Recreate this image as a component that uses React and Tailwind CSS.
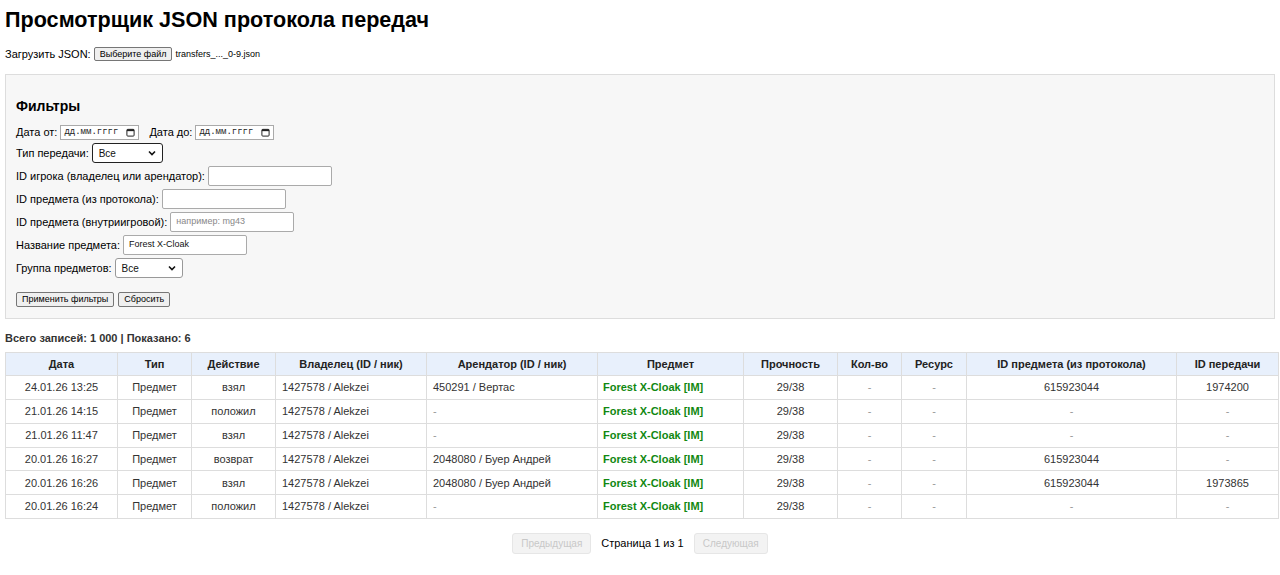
const rows = [
  { date: '24.01.26 13:25', action: 'взял', renter: '450291 / Вертас', pid: '615923044', tid: '1974200' },
  { date: '21.01.26 14:15', action: 'положил', renter: '-', pid: '-', tid: '-' },
  { date: '21.01.26 11:47', action: 'взял', renter: '-', pid: '-', tid: '-' },
  { date: '20.01.26 16:27', action: 'возврат', renter: '2048080 / Буер Андрей', pid: '615923044', tid: '-' },
  { date: '20.01.26 16:26', action: 'взял', renter: '2048080 / Буер Андрей', pid: '615923044', tid: '1973865' },
  { date: '20.01.26 16:24', action: 'положил', renter: '-', pid: '-', tid: '-' },
];

const cols = [
  { title: 'Дата', w: 'w-[112px]' },
  { title: 'Тип', w: 'w-[74px]' },
  { title: 'Действие', w: 'w-[84px]' },
  { title: 'Владелец (ID / ник)', w: 'w-[151px]' },
  { title: 'Арендатор (ID / ник)', w: 'w-[171px]' },
  { title: 'Предмет', w: 'w-[146px]' },
  { title: 'Прочность', w: 'w-[94px]' },
  { title: 'Кол-во', w: 'w-[64px]' },
  { title: 'Ресурс', w: 'w-[65px]' },
  { title: 'ID предмета (из протокола)', w: 'w-[210px]' },
  { title: 'ID передачи', w: 'w-[102px]' },
];

function DateBox() {
  return (
    <span className="inline-flex items-center justify-between w-[79px] h-[15px] border border-[#aaa] bg-white px-[3px]">
      <span className="text-[9px] leading-none text-[#222]" style={{ fontFamily: '"Liberation Mono", monospace' }}>дд.мм.гггг</span>
      <svg width="9" height="9" viewBox="0 0 10 10" className="text-[#222]">
        <rect x="1" y="1.5" width="8" height="7.5" rx="1" fill="none" stroke="currentColor" strokeWidth="1.1" />
        <rect x="1" y="1.5" width="8" height="2" fill="currentColor" />
      </svg>
    </span>
  );
}

function FakeSelect({ w, dark }) {
  return (
    <span className={`inline-flex items-center justify-between h-[20px] ${w} bg-white px-[6px] rounded-[3px] border ${dark ? 'border-[#222]' : 'border-[#999]'}`}>
      <span className="text-[10px] text-[#111]">Все</span>
      <svg width="8" height="6" viewBox="0 0 8 6">
        <path d="M1 1.5 L4 4.5 L7 1.5" fill="none" stroke="#111" strokeWidth="1.6" />
      </svg>
    </span>
  );
}

function TextBox({ value, placeholder }) {
  return (
    <span className="inline-flex items-center w-[124px] h-[20px] bg-white border border-[#aaa] rounded-[2px] px-[5px] text-[9px]">
      {value ? <span className="text-[#111]">{value}</span> : <span className="text-[#888]">{placeholder}</span>}
    </span>
  );
}

function Btn({ children }) {
  return (
    <button className="h-[15px] px-[5px] bg-[#efefef] border border-[#767676] rounded-[2px] text-[9px] leading-none text-black">
      {children}
    </button>
  );
}

function Row({ label, children }) {
  return (
    <div className="flex items-center h-[23px] gap-[3px]">
      <span>{label}</span>
      {children}
    </div>
  );
}

export default function App() {
  return (
    <div className="min-h-screen bg-white px-[5px] text-[11px] text-black" style={{ fontFamily: '"Liberation Sans", Arial, sans-serif' }}>
      <h1 className="text-[21.6px] font-bold pt-[7px] leading-[25px]">Просмотрщик JSON протокола передач</h1>

      <div className="flex items-center gap-[3px] mt-[14px] text-[11px]">
        <span>Загрузить JSON:</span>
        <button className="h-[14px] px-[5px] bg-[#efefef] border border-[#767676] rounded-[2px] text-[9px] leading-none">Выберите файл</button>
        <span className="text-[9px]">transfers_..._0-9.json</span>
      </div>

      <div className="mt-[11px] bg-[#f7f7f7] border border-[#ddd] px-[10px] pt-[22px] pb-[11px]">
        <h3 className="text-[14px] font-bold leading-[18px] mb-[9px]">Фильтры</h3>
        <div className="flex items-center h-[18px] gap-[3px]">
          <span>Дата от:</span>
          <DateBox />
          <span className="ml-[7px]">Дата до:</span>
          <DateBox />
        </div>
        <Row label="Тип передачи:"><FakeSelect w="w-[71px]" dark /></Row>
        <Row label="ID игрока (владелец или арендатор):"><TextBox /></Row>
        <Row label="ID предмета (из протокола):"><TextBox /></Row>
        <Row label="ID предмета (внутриигровой):"><TextBox placeholder="например: mg43" /></Row>
        <Row label="Название предмета:"><TextBox value="Forest X-Cloak" /></Row>
        <Row label="Группа предметов:"><FakeSelect w="w-[68px]" /></Row>
        <div className="flex gap-[4px] mt-[12px]">
          <Btn>Применить фильтры</Btn>
          <Btn>Сбросить</Btn>
        </div>
      </div>

      <div className="mt-[12px] font-bold text-[11px] text-[#333] leading-[14px]">Всего записей: 1 000 | Показано: 6</div>

      <table className="mt-[7px] w-full border-collapse table-fixed text-[11px] text-[#333]">
        <thead>
          <tr className="h-[23.8px] bg-[#e8f0fc]">
            {cols.map((c) => (
              <th key={c.title} className={`${c.w} border border-[#ddd] font-bold text-center text-[#222]`}>{c.title}</th>
            ))}
          </tr>
        </thead>
        <tbody>
          {rows.map((r) => (
            <tr key={r.date} className="h-[23.8px]">
              <td className="border border-[#ddd] text-center">{r.date}</td>
              <td className="border border-[#ddd] text-center">Предмет</td>
              <td className="border border-[#ddd] text-center">{r.action}</td>
              <td className="border border-[#ddd] pl-[6px]">1427578 / Alekzei</td>
              <td className={`border border-[#ddd] pl-[6px] ${r.renter === '-' ? 'text-[#999]' : ''}`}>{r.renter}</td>
              <td className="border border-[#ddd] pl-[5px] font-bold text-[#118811]">Forest X-Cloak [IM]</td>
              <td className="border border-[#ddd] text-center">29/38</td>
              <td className="border border-[#ddd] text-center text-[#999]">-</td>
              <td className="border border-[#ddd] text-center text-[#999]">-</td>
              <td className={`border border-[#ddd] text-center ${r.pid === '-' ? 'text-[#999]' : ''}`}>{r.pid}</td>
              <td className={`border border-[#ddd] text-center ${r.tid === '-' ? 'text-[#999]' : ''}`}>{r.tid}</td>
            </tr>
          ))}
        </tbody>
      </table>

      <div className="flex justify-center items-center gap-[10px] mt-[14px]">
        <button disabled className="w-[79px] h-[21px] bg-[#f3f3f3] border border-[#e6e6e6] rounded-[3px] text-[10px] text-[#c8c8c8]">Предыдущая</button>
        <span className="text-[11px]">Страница 1 из 1</span>
        <button disabled className="w-[74px] h-[21px] bg-[#f3f3f3] border border-[#e6e6e6] rounded-[3px] text-[10px] text-[#c8c8c8]">Следующая</button>
      </div>
    </div>
  );
}
